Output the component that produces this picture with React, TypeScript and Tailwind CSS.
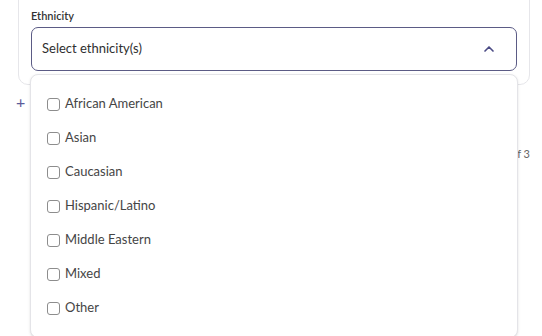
import React from "react";
import { ChevronUp } from "lucide-react";

const options = [
  "African American",
  "Asian",
  "Caucasian",
  "Hispanic/Latino",
  "Middle Eastern",
  "Mixed",
  "Other",
];

const App = () => {
  return (
    <div className="relative w-[542px] h-[336px] overflow-hidden bg-white font-['Lato',sans-serif] text-[#3d3d3d]">
      <div className="ml-[18px] w-[512px] mt-[-20px] pt-[28px] pb-[13px] px-[12px] border border-[#e6e6ea] rounded-[10px] bg-white">
        <div className="text-[11px] font-semibold leading-[14px] text-[#333]">Ethnicity</div>
        <div className="relative mt-[4px]">
          <div className="flex items-center justify-between h-[44px] px-[10px] border border-[#5b5b85] rounded-[7px] bg-white">
            <span className="text-[13px] text-[#2f2f2f]">Select ethnicity(s)</span>
            <ChevronUp size={16} strokeWidth={2.5} className="text-[#4b4b85] mr-[9px]" />
          </div>
          <div className="absolute z-10 left-[-1px] right-[-1px] top-[calc(100%+3px)] h-[264px] pt-[12px] bg-white border border-[#e4e4e8] rounded-[8px] shadow-sm">
            {options.map((o) => (
              <label key={o} className="flex items-center gap-[5px] h-[34px] pl-[16px]">
                <span className="w-[13px] h-[13px] border border-[#8d8d8d] rounded-[3px] bg-white" />
                <span className="text-[13px] text-[#454545]">{o}</span>
              </label>
            ))}
          </div>
        </div>
      </div>
      <div className="flex items-center pl-[16px] mt-[8px] text-[#5b5b9a] text-[16px] leading-[18px]">+</div>
      <div className="flex justify-end pr-[12px] mt-[35px] text-[11px] text-[#666]">Page 1 of 3</div>
    </div>
  );
};

export default App;
